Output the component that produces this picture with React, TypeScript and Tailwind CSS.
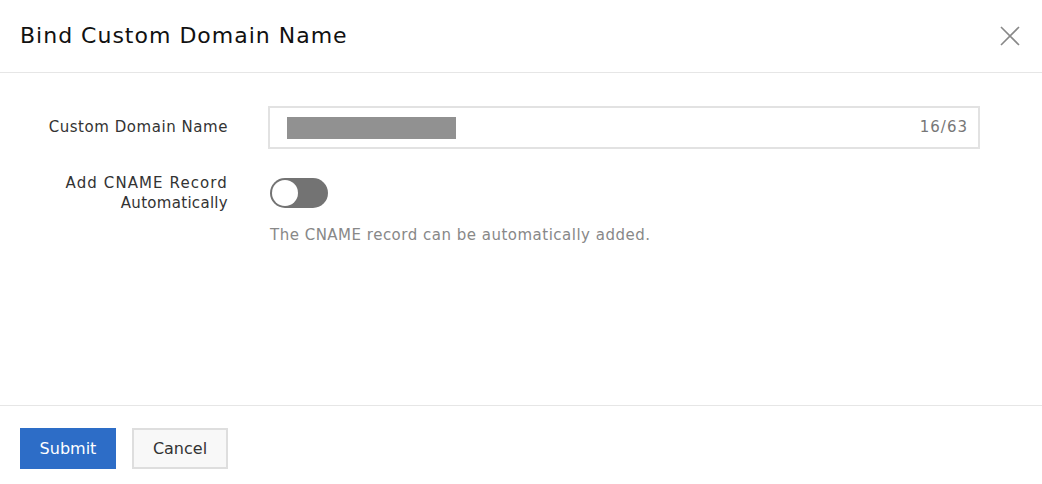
import React from 'react';

const font = { fontFamily: '"DejaVu Sans", "Noto Sans CJK JP", sans-serif' };

export default function App() {
  return (
    <div className="flex h-[484px] w-[1042px] flex-col bg-white text-[#333]" style={font}>
      {/* header */}
      <div className="flex h-[73px] items-center justify-between border-b border-[#e6e6e6] pl-5 pr-[20px]">
        <h1 className="-mt-[2px] text-[22px] font-normal tracking-[1px] text-[#111]">Bind Custom Domain Name</h1>
        <button className="flex h-6 w-6 items-center justify-center text-[#888]">
          <svg width="20" height="20" viewBox="0 0 20 20" fill="none" stroke="currentColor" strokeWidth="1.6">
            <path d="M1 1 L19 19 M19 1 L1 19" />
          </svg>
        </button>
      </div>

      {/* body */}
      <div className="flex-1 pt-[33px]">
        <div className="flex items-center">
          <label className="w-[228px] text-right text-[15px] tracking-[0.55px] text-[#333]">Custom Domain Name</label>
          <div className="ml-10 flex h-[43px] w-[712px] items-center justify-between border-2 border-[#e2e2e2] pl-[17px] pr-[10px]">
            <div className="h-[22px] w-[169px] bg-[#919191]" />
            <span className="text-[15px] tracking-[1px] text-[#777]">16/63</span>
          </div>
        </div>

        <div className="mt-[23px] flex items-start">
          <label className="w-[228px] pt-[1px] text-right text-[15px] leading-[20px] text-[#333]">
            <span className="tracking-[1.1px]">Add CNAME Record</span>
            <br />
            <span className="tracking-[0.3px]">Automatically</span>
          </label>
          <div className="ml-[42px] flex flex-col">
            <div className="mt-[6px] flex h-[30px] w-[58px] items-center rounded-full bg-[#737373] px-[2px]">
              <div className="h-[26px] w-[26px] rounded-full bg-white" />
            </div>
            <p className="mt-[16px] text-[15px] tracking-[0.5px] text-[#888]">The CNAME record can be automatically added.</p>
          </div>
        </div>
      </div>

      {/* footer */}
      <div className="flex h-[79px] items-start gap-4 border-t border-[#e6e6e6] px-5 pt-[22px]">
        <button className="h-[41px] w-[96px] bg-[#2d6dc7] text-[16px] text-white">Submit</button>
        <button className="h-[41px] w-[96px] border-2 border-[#dedede] bg-[#f8f8f8] text-[16px] text-[#333]">
          Cancel
        </button>
      </div>
    </div>
  );
}
